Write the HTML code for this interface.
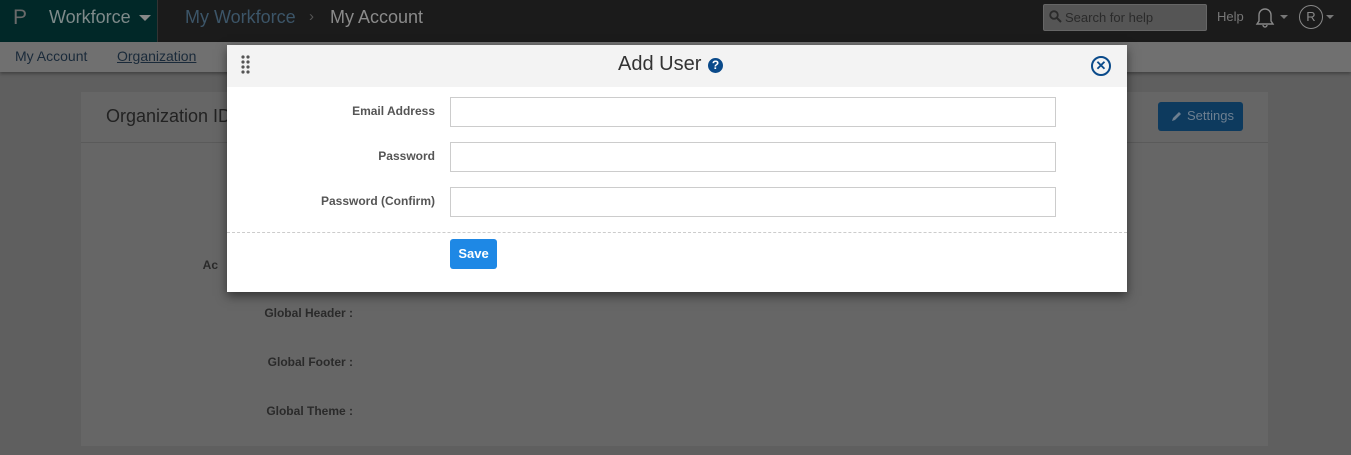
<!DOCTYPE html>
<html><head><meta charset="utf-8"><style>
*{box-sizing:border-box;margin:0;padding:0}
body{width:1351px;height:455px;overflow:hidden;background:#5f5f5f;font-family:"Liberation Sans",sans-serif;position:relative}
.top{position:absolute;left:0;top:0;width:1351px;height:42px;background:#1b1b1b}
.brand{position:absolute;left:0;top:0;width:158px;height:42px;background:#012828;border-right:1px solid #333}
.sub{position:absolute;left:0;top:42px;width:1351px;height:30px;background:#707070;box-shadow:0 2px 3px rgba(0,0,0,.3)}
.card{position:absolute;left:81px;top:92px;width:1187px;height:354px;background:#666}
.t{position:absolute;white-space:nowrap}
.lbl{position:absolute;font-size:12px;font-weight:bold;color:#2a2a2a;text-align:right;width:200px}
.modal{position:absolute;left:227px;top:45px;width:900px;height:247px;background:#fff;box-shadow:0 4px 10px rgba(0,0,0,.5)}
.mh{height:42px;background:#f3f3f3;position:relative}
.ml{position:absolute;left:0;width:208px;text-align:right;font-size:12px;font-weight:bold;color:#555}
.in{position:absolute;left:223px;width:606px;height:30px;border:1px solid #ccc;background:#fff}
</style></head><body>
<div class="top"></div>
<div class="brand"></div>
<div class="t" style="left:13px;top:6px;font-size:21px;color:#6a6a6a">P</div>
<div class="t" style="left:49px;top:7px;font-size:18px;color:#7f8a8a">Workforce</div>
<div class="t" style="left:139px;top:15px;width:0;height:0;border-left:6px solid transparent;border-right:6px solid transparent;border-top:6px solid #888"></div>
<div class="t" style="left:185px;top:7px;font-size:18px;color:#3c5568">My Workforce</div>
<div class="t" style="left:309px;top:8px;font-size:15px;color:#555">›</div>
<div class="t" style="left:330px;top:7px;font-size:18px;color:#8a8a8a">My Account</div>
<div class="t" style="left:1043px;top:4px;width:164px;height:27px;background:#555;border:1px solid #666;border-radius:2px;color:#2a2a2a;font-size:13px;padding:5px 0 0 21px">Search for help</div>
<svg class="t" style="left:1049px;top:10px" width="13" height="13" viewBox="0 0 13 13"><circle cx="5" cy="5" r="3.8" fill="none" stroke="#2a2a2a" stroke-width="1.8"/><path d="M8 8l4 4" stroke="#2a2a2a" stroke-width="2"/></svg>
<div class="t" style="left:1217px;top:9px;font-size:13px;color:#777">Help</div>
<svg class="t" style="left:1253px;top:5px" width="24" height="24" viewBox="0 0 24 24"><path d="M4 19h16l-2-3v-6a6 6 0 0 0-12 0v6z M10 20a2 2 0 0 0 4 0" fill="none" stroke="#888" stroke-width="1.4"/></svg>
<div class="t" style="left:1280px;top:15px;border-left:4px solid transparent;border-right:4px solid transparent;border-top:4px solid #777"></div>
<div class="t" style="left:1299px;top:5px;width:24px;height:24px;border:1.5px solid #888;border-radius:50%;color:#888;font-size:13px;text-align:center;line-height:21px">R</div>
<div class="t" style="left:1326px;top:15px;border-left:4px solid transparent;border-right:4px solid transparent;border-top:4px solid #777"></div>
<div class="sub"></div>
<div class="t" style="left:15px;top:48px;font-size:14px;color:#1a2a3a">My Account</div>
<div class="t" style="left:117px;top:48px;font-size:14px;color:#1a2a3a;text-decoration:underline">Organization</div>
<div class="card"></div>
<div style="position:absolute;left:81px;top:142px;width:1187px;height:1px;background:#5a5a5a"></div>
<div class="t" style="left:106px;top:106px;font-size:18px;color:#222">Organization ID</div>
<div class="t" style="left:1158px;top:102px;width:85px;height:29px;background:#0d3a5e;border-radius:3px;color:#6d7f90;font-size:13px;padding:6px 0 0 29px">Settings</div>
<svg class="t" style="left:1171px;top:110px" width="12" height="12" viewBox="0 0 12 12"><path d="M1 11l1-3 6-6 2 2-6 6z" fill="#6d7f90"/></svg>
<div class="lbl" style="left:18px;top:258px">Ac</div>
<div class="lbl" style="left:153px;top:306px">Global Header :</div>
<div class="lbl" style="left:153px;top:355px">Global Footer :</div>
<div class="lbl" style="left:153px;top:404px">Global Theme :</div>
<div class="modal">
<div class="mh">
<svg style="position:absolute;left:14px;top:10px" width="10" height="20" viewBox="0 0 10 20"><g fill="#555"><circle cx="2" cy="2" r="1.6"/><circle cx="7" cy="2" r="1.6"/><circle cx="2" cy="7" r="1.6"/><circle cx="7" cy="7" r="1.6"/><circle cx="2" cy="12" r="1.6"/><circle cx="7" cy="12" r="1.6"/><circle cx="2" cy="17" r="1.6"/><circle cx="7" cy="17" r="1.6"/></g></svg>
<div style="position:absolute;left:391px;top:8px;font-size:20px;color:#333">Add User</div>
<div style="position:absolute;left:481px;top:13px;width:15px;height:15px;border-radius:50%;background:#0a4a8a;color:#fff;font-size:12px;font-weight:bold;text-align:center;line-height:15px">?</div>
<div style="position:absolute;left:864px;top:11px;width:20px;height:20px;border:2px solid #0a4a8a;border-radius:50%;color:#0a4a8a;font-size:13px;font-weight:bold;text-align:center;line-height:16px">✕</div>
</div>
<div class="ml" style="top:59px">Email Address</div><div class="in" style="top:52px"></div>
<div class="ml" style="top:104px">Password</div><div class="in" style="top:97px"></div>
<div class="ml" style="top:149px">Password (Confirm)</div><div class="in" style="top:142px"></div>
<div style="position:absolute;left:0;top:187px;width:900px;border-top:1px dashed #ccc"></div>
<div style="position:absolute;left:223px;top:194px;width:47px;height:30px;background:#1e88e5;border-radius:3px;color:#fff;font-size:13px;font-weight:bold;text-align:center;line-height:29px">Save</div>
</div>
</body></html>
